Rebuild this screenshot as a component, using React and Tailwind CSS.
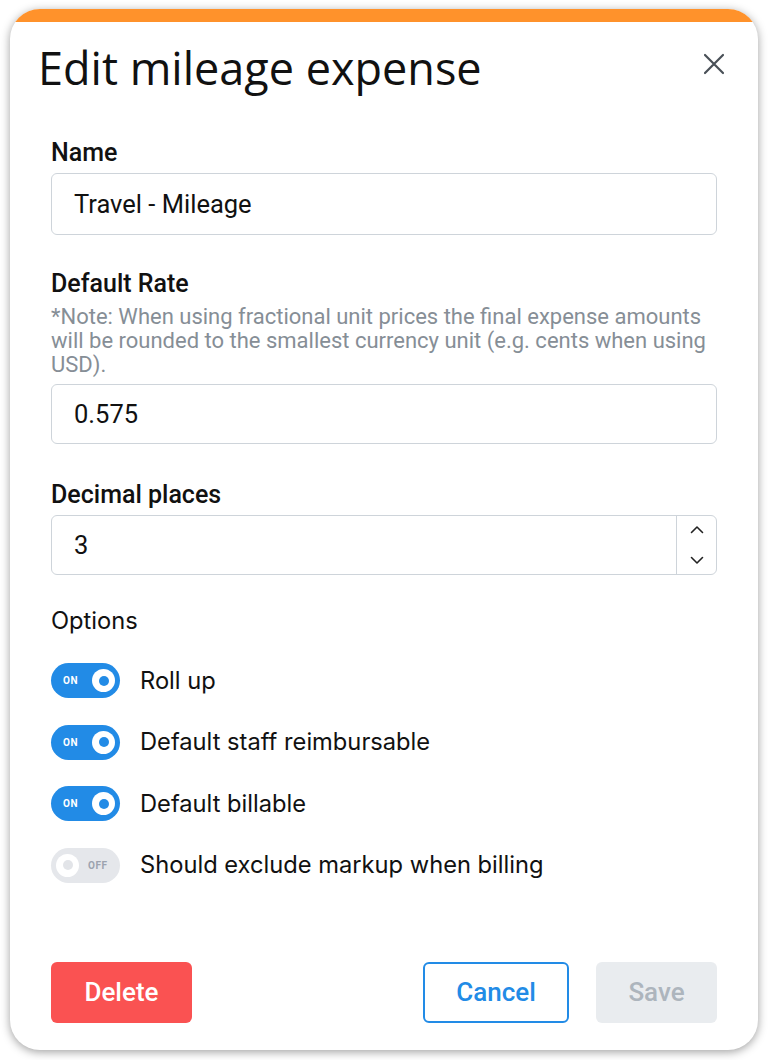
import React from "react";

const ui = { fontFamily: "Roboto, 'Liberation Sans', sans-serif" };
const soft = { fontFamily: "Inter, 'Noto Sans', sans-serif" };

function Label({ children, className = "" }) {
  return (
    <div className={`h-[28px] flex items-center text-[25px] font-medium text-[#111] ${className}`} style={ui}>
      {children}
    </div>
  );
}

function TextInput({ value, className = "", h = "h-[61px]" }) {
  return (
    <div
      className={`${h} w-full rounded-[6px] border border-[#ced4da] flex items-center pl-[22px] text-[25.5px] text-[#111] ${className}`}
      style={ui}
    >
      {value}
    </div>
  );
}

function Toggle({ on }) {
  if (on) {
    return (
      <div className="relative h-[35px] w-[69px] rounded-full bg-[#228be6] flex items-center shrink-0">
        <span className="ml-[12px] text-[10px] font-bold tracking-[0.5px] text-white" style={ui}>
          ON
        </span>
        <span className="absolute right-[5px] top-[6px] h-[23px] w-[23px] rounded-full bg-white flex items-center justify-center">
          <span className="h-[10px] w-[10px] rounded-full bg-[#228be6]" />
        </span>
      </div>
    );
  }
  return (
    <div className="relative h-[35px] w-[69px] rounded-full bg-[#e5e7eb] flex items-center shrink-0">
      <span className="absolute left-[5px] top-[6px] h-[23px] w-[23px] rounded-full bg-white flex items-center justify-center">
        <span className="h-[10px] w-[10px] rounded-full bg-[#e2e4e8]" />
      </span>
      <span className="ml-[37px] text-[10px] font-bold tracking-[0.5px] text-[#9ca3af]" style={ui}>
        OFF
      </span>
    </div>
  );
}

function OptionRow({ on, label }) {
  return (
    <div className="h-[35px] flex items-center gap-[20px]">
      <Toggle on={on} />
      <span className="text-[23.7px] text-[#111]" style={soft}>
        {label}
      </span>
    </div>
  );
}

export default function App() {
  return (
    <div className="min-h-[1060px] w-[768px] bg-white pl-[10px] pt-[9px]">
      <div className="w-[748px] h-[1041px] rounded-[30px] bg-white overflow-hidden shadow-[0_2px_10px_rgba(0,0,0,0.38)] flex flex-col">
        <div className="h-[13px] bg-[#ff922b] shrink-0" />

        {/* header */}
        <div className="h-[117px] flex items-start justify-between pl-[28px] pr-[32px]">
          <h1 className="mt-[21px] text-[45px] leading-[50px] text-[#111]" style={{ fontFamily: "'Open Sans', sans-serif" }}>
            Edit mileage expense
          </h1>
          <button className="mt-[30px] h-[24px] w-[24px] flex items-center justify-center text-[#495057]">
            <svg width="22" height="22" viewBox="0 0 22 22" fill="none" stroke="currentColor" strokeWidth="2.2" strokeLinecap="round">
              <path d="M2 2 L20 20 M20 2 L2 20" />
            </svg>
          </button>
        </div>

        {/* body */}
        <div className="flex flex-col px-[41px] flex-1">
          <Label>Name</Label>
          <TextInput value="Travel - Mileage" className="mt-[6px]" h="h-[62px]" />

          <Label className="mt-[35px]">Default Rate</Label>
          <p className="mt-[7px] text-[22px] leading-[24px] text-[#868e96]" style={ui}>
            *Note: When using fractional unit prices the final expense amounts will be rounded to the smallest currency unit (e.g. cents when using USD).
          </p>
          <TextInput value="0.575" className="mt-[7px]" h="h-[60px]" />

          <Label className="mt-[37px]">Decimal places</Label>
          <div className="mt-[6px] h-[60px] w-full rounded-[6px] border border-[#ced4da] flex items-stretch" style={ui}>
            <div className="flex-1 flex items-center pl-[22px] text-[25.5px] text-[#111]">3</div>
            <div className="w-[40px] border-l border-[#ced4da] flex flex-col items-center justify-between py-[9px] text-[#222]">
              <svg width="14" height="9" viewBox="0 0 14 9" fill="none" stroke="currentColor" strokeWidth="1.6" strokeLinecap="round" strokeLinejoin="round">
                <path d="M1.5 7.5 L7 2 L12.5 7.5" />
              </svg>
              <svg width="14" height="9" viewBox="0 0 14 9" fill="none" stroke="currentColor" strokeWidth="1.6" strokeLinecap="round" strokeLinejoin="round">
                <path d="M1.5 1.5 L7 7 L12.5 1.5" />
              </svg>
            </div>
          </div>

          <div className="mt-[32px] h-[28px] flex items-center text-[23.7px] text-[#111]" style={soft}>
            Options
          </div>

          <div className="mt-[28px] flex flex-col gap-[26.5px]">
            <OptionRow on label="Roll up" />
            <OptionRow on label="Default staff reimbursable" />
            <OptionRow on label="Default billable" />
            <OptionRow on={false} label="Should exclude markup when billing" />
          </div>

          <div className="mt-auto mb-[27px] flex items-center text-[26px] font-medium" style={ui}>
            <button className="h-[61px] w-[141px] rounded-[6px] bg-[#fa5252] text-white">Delete</button>
            <div className="flex-1" />
            <button className="h-[61px] w-[146px] rounded-[6px] border-2 border-[#228be6] bg-white text-[#228be6]">Cancel</button>
            <button className="ml-[27px] h-[61px] w-[121px] rounded-[6px] bg-[#e9ecef] text-[#adb5bd]">Save</button>
          </div>
        </div>
      </div>
    </div>
  );
}
